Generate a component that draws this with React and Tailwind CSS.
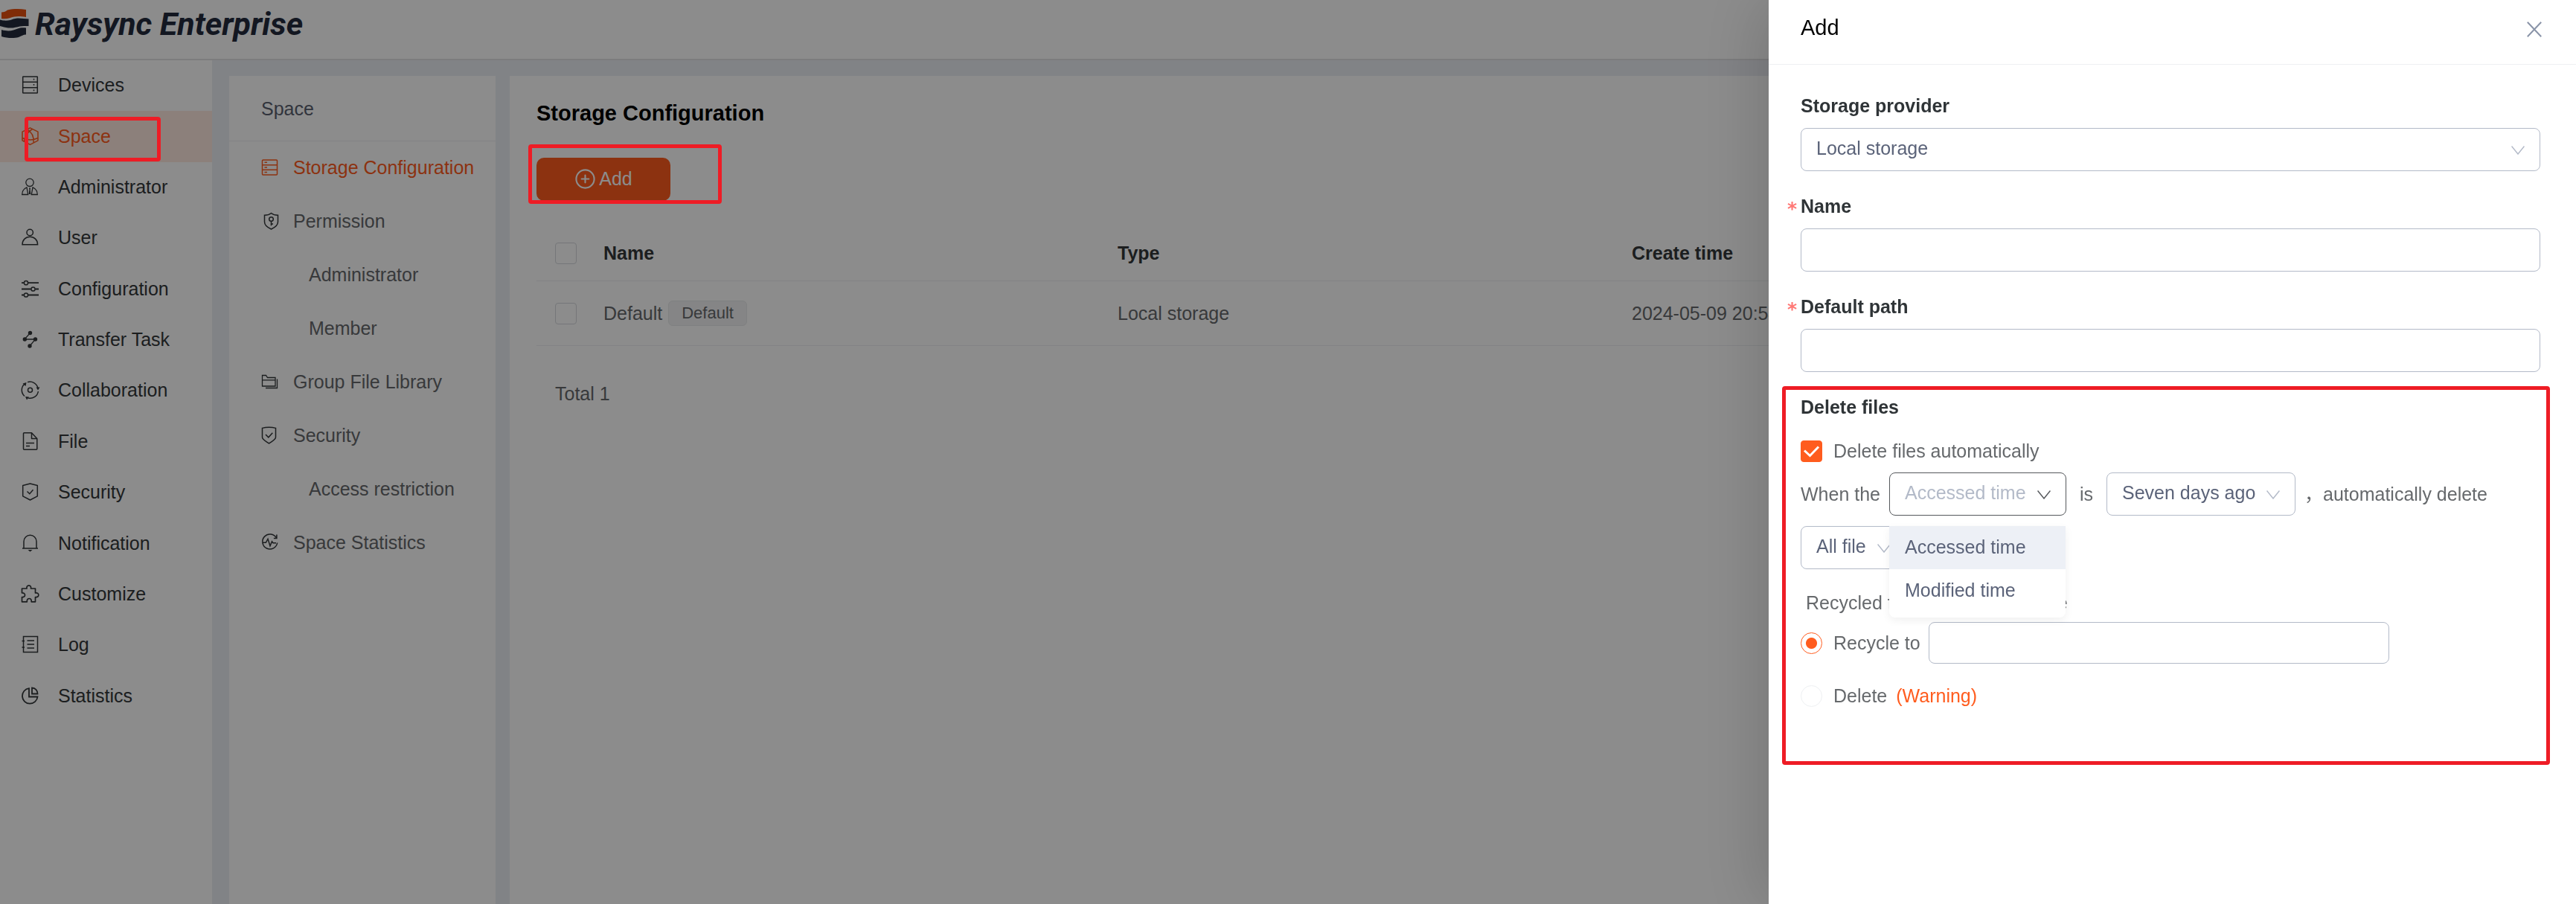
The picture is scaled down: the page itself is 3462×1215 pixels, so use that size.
import React from 'react';
import { CirclePlus } from 'lucide-react';

function Icon({ children, className = 'size-6' }) {
  return (
    <svg
      viewBox="0 0 24 24"
      fill="none"
      stroke="currentColor"
      strokeWidth="1.5"
      className={`shrink-0 overflow-visible ${className}`}
      aria-hidden="true"
    >
      {children}
    </svg>
  );
}

const icons = {
  devices: (
    <>
      <rect x="2.7" y="1" width="19.6" height="22" rx="0.5" />
      <path d="M2.7 8.2h19.6M2.7 15.8h19.6M17.5 3.8v1.8M17.5 11v1.8M17.5 18.4v1.8" />
    </>
  ),
  space: (
    <>
      <path d="M12.5 0.8l10.5 5.4v11.6l-10.5 5.6L2 17.8V6.2z" strokeLinejoin="round" />
      <path d="M8.5 2.8c5.5 3 9.2 9 8.7 18M15.5 2.5C9.5 6 5.5 11 4.5 19M2 14.5c6.5 3.2 15 3.2 21 0" />
    </>
  ),
  administrator: (
    <g strokeWidth="1.3">
      <circle cx="12" cy="6.3" r="5.2" />
      <path d="M8 12.8c-4 1.7-6.3 5-6.3 9.7h8zM16 12.8c4 1.7 6.3 5 6.3 9.7h-8z" />
      <path d="M11 13.5h2l-0.4 2.5 0.8 6h-2.8l0.8-6z" fill="currentColor" stroke="none" />
    </g>
  ),
  user: (
    <>
      <circle cx="12.2" cy="5.5" r="4.2" />
      <path d="M2 21.8c0-6.5 4.5-10.5 10.3-10.5s10.3 4 10.3 10.5z" />
    </>
  ),
  configuration: (
    <>
      <path d="M1 4.2h3M10 4.2h14M1 12.5h12.5M19.5 12.5H24M1 20.5h3M10 20.5h14" strokeWidth="1.8" />
      <circle cx="7" cy="4.2" r="2.6" />
      <circle cx="16.5" cy="12.5" r="2.6" />
      <circle cx="7" cy="20.5" r="2.6" />
    </>
  ),
  transfer: (
    <>
      <path d="M12.5 3.5L5 12h14.5l-7.5 9" strokeWidth="1.3" />
      <g fill="currentColor" stroke="none">
        <circle cx="12.5" cy="3.5" r="2.7" />
        <circle cx="5.3" cy="12" r="2.7" />
        <circle cx="19.5" cy="12" r="2.7" />
        <circle cx="12" cy="21" r="2.7" />
      </g>
    </>
  ),
  collaboration: (
    <>
      <circle cx="12.5" cy="12.3" r="3" />
      <path d="M9 1.6a11 11 0 0 1 14 8M23.4 14a11 11 0 0 1-13.5 9M5 20.5A11 11 0 0 1 5 4" />
      <path d="M2.5 3.5l5-1.5-1 5zM20.5 8.5h5l-2.5 4zM6 21l5 0.5-3 4z" fill="currentColor" stroke="none" />
    </>
  ),
  file: (
    <>
      <path d="M14.5 0.8H4.5a1 1 0 0 0-1 1v20.5a1 1 0 0 0 1 1h16.3a1 1 0 0 0 1-1V8.5zM14.5 0.8v7.7h7.3" strokeLinejoin="round" />
      <path d="M7 14.5h11M7 18.5h5" />
    </>
  ),
  security: (
    <>
      <path d="M12.5 1L22.3 3.5v14.3l-9.8 5.2-9.8-5.2V3.5z" strokeLinejoin="round" />
      <path d="M8.5 11.5l3.3 3.2 4.7-5.5" />
    </>
  ),
  notification: (
    <>
      <path d="M4 18.8V9.8a8.5 8.5 0 0 1 17 0v9M2 18.9h21" />
      <path d="M9.5 21h6l-3 2.5z" fill="currentColor" stroke="none" />
    </>
  ),
  customize: (
    <path
      d="M1.5 5h6.5c-0.5-2.5 0.8-4.2 2.8-4.2S14 2.5 13.5 5h6v6c2.8-0.5 4.3 0.7 4.3 2.7s-1.5 3.3-4.3 2.8v6.3h-5.3c0.3-3.2-1-4.3-2.9-4.3s-3.3 1.3-3 4.3H1.5v-6.3c2.7 0.3 4-1 4-2.8s-1.3-3-4-2.7z"
      strokeLinejoin="round"
      strokeWidth="1.7"
    />
  ),
  log: (
    <>
      <rect x="3.5" y="1.5" width="19" height="21" />
      <path d="M8.5 7h9.5M8.5 12h9.5M8.5 17h9.5M1.5 7.5h3.5M1.5 16h3.5" />
    </>
  ),
  statistics: (
    <g strokeWidth="1.8">
      <path d="M11 2.2a10.3 10.3 0 1 0 11.5 11.3H11z" />
      <path d="M15 1.5v8h7.5c0-4.5-3-8-7.5-8z" />
    </g>
  ),
  storage: (
    <>
      <rect x="1.5" y="2" width="20" height="20" rx="1" />
      <path d="M1.5 8.7h20M1.5 15.3h20M4.5 5.3h3.5M4.5 12h3.5M4.5 18.6h3.5" />
    </>
  ),
  permission: (
    <>
      <path d="M13.5 1.5c2.5 2 5.5 2.7 9 2.8v9c0 4.5-4 7.5-9 9.7-5-2.2-9-5.2-9-9.7v-9c3.5-0.1 6.5-0.8 9-2.8z" />
      <circle cx="13.5" cy="9.5" r="2.8" />
      <path d="M13.5 12.3v6M13.5 16h2.5" />
    </>
  ),
  library: (
    <g strokeWidth="1.3">
      <path d="M1.5 18V3.5h5l2 3h10.5V18zM1.5 9.8H19M21.5 8.5v12H6" />
    </g>
  ),
  shield: (
    <>
      <path d="M10.5 1.2c3 0 6 0.3 9 1.2v12.4c0 3.5-6 5.7-9 8.2-3-2.5-9-4.7-9-8.2V2.4c3-0.9 6-1.2 9-1.2z" />
      <path d="M6 11l3.8 3.8 5.5-6" />
    </>
  ),
  pulse: (
    <>
      <path d="M20.5 6A10 10 0 1 0 21.7 12.5M20.9 1.5v5h-4" />
      <path d="M2 12.3h4.3l2.7-5 3 9.5 2.5-6 1.5 2h4" />
    </>
  ),
};

const navItems = [
  ['Devices', icons.devices],
  ['Space', icons.space],
  ['Administrator', icons.administrator],
  ['User', icons.user],
  ['Configuration', icons.configuration],
  ['Transfer Task', icons.transfer],
  ['Collaboration', icons.collaboration],
  ['File', icons.file],
  ['Security', icons.security],
  ['Notification', icons.notification],
  ['Customize', icons.customize],
  ['Log', icons.log],
  ['Statistics', icons.statistics],
];

const subItems = [
  { label: 'Storage Configuration', icon: icons.storage, active: true },
  { label: 'Permission', icon: icons.permission },
  { label: 'Administrator' },
  { label: 'Member' },
  { label: 'Group File Library', icon: icons.library },
  { label: 'Security', icon: icons.shield },
  { label: 'Access restriction' },
  { label: 'Space Statistics', icon: icons.pulse },
];

// red outline that stays above the page mask
function Highlight({ className }) {
  return (
    <span className={`pointer-events-none absolute z-30 rounded-sm border-5 border-[#ee1c25] ${className}`} />
  );
}

function Header() {
  return (
    <header className="flex h-[81px] items-start border-b-2 border-[#e2e2e4] bg-white pt-3">
      <svg viewBox="0 0 39 40" className="h-10 w-[39px]" aria-hidden="true">
        <path d="M2 4.5c3 0 6-1 8-3C18-0.3 27-0.3 35 1v10c-6-1-11-1.500-16-0.500-5 1-9 3.500-17 2.500z" fill="#e8500f" />
        <path d="M0 14.500c5 1.500 9 1.500 14 0.500 4-1.500 6-2.500 11-2.500 5 0 9 1 13.500 1V23c-5 0-8-0.500-12 0.500S18 26 11 25.500c-4-0.500-7-1.500-11-2.500z" fill="#232b3d" />
        <path d="M2 28c7 2 12 1.500 16 0.500 5-1.500 8-4 17-3v9c-4 0-6 2-10 3.500-6 1.500-15 1.500-23-1z" fill="#232b3d" />
      </svg>
      <span className="ml-2 font-[Roboto,sans-serif] text-[43px] leading-[40px] font-bold text-[#232b3d] italic">
        Raysync Enterprise
      </span>
    </header>
  );
}

function Sidebar() {
  return (
    <nav className="w-[285px] shrink-0 bg-white">
      <ul className="grid h-[889px] auto-rows-fr">
        {navItems.map(([label, icon]) => {
          const active = label === 'Space';
          return (
            <li key={label} className="relative">
              <a
                href="#"
                className={`flex h-full items-center gap-[26px] pb-0.5 pl-7 ${active ? 'bg-[#ffe9e0] text-[#ff5c1e]' : 'text-[#33373a]'}`}
              >
                <Icon>{icon}</Icon>
                {label}
              </a>
              {active && <Highlight className="top-2 left-[33px] h-[60px] w-[183px]" />}
            </li>
          );
        })}
      </ul>
    </nav>
  );
}

function SubMenu() {
  return (
    <nav className="w-[358px] shrink-0 bg-white">
      <h2 className="flex h-[88px] items-center border-b border-[#eeeff2] pl-[43px] text-[#5a5f70]">Space</h2>
      <ul>
        {subItems.map(({ label, icon, active }) => (
          <li key={label}>
            <a
              href="#"
              className={`flex h-[72px] items-center gap-[19px] pb-0.5 whitespace-nowrap ${icon ? 'pl-[43px]' : 'pl-[107px]'} ${active ? 'text-[#ff5c1e]' : 'text-[#66696c]'}`}
            >
              {icon && <Icon className={active ? 'size-6' : 'size-6 text-[#33373a]'}>{icon}</Icon>}
              {label}
            </a>
          </li>
        ))}
      </ul>
    </nav>
  );
}

function TableCheckbox({ label }) {
  return (
    <input
      type="checkbox"
      aria-label={label}
      className="block size-[29px] appearance-none rounded-[4px] border border-[#d6d8dc] bg-white"
    />
  );
}

function StorageConfiguration() {
  return (
    <main className="min-w-0 flex-1 bg-white px-9 pt-8">
      <h1 className="text-[29px] leading-[36px] font-bold text-black">Storage Configuration</h1>

      <div className="relative mt-[42px]">
        <button
          type="button"
          className="flex h-[58px] w-[180px] items-center justify-center gap-1 rounded-[10px] bg-[#ff5c1e] pb-0.5 text-white"
        >
          <CirclePlus className="size-[29px]" strokeWidth={1.75} />
          Add
        </button>
        <Highlight className="-top-[18px] -left-[11px] h-[80px] w-[260px]" />
      </div>

      <table className="mt-[33px] w-full table-fixed border-separate border-spacing-0 text-left text-[#66696c]">
        <thead>
          <tr className="font-bold text-[#33373a] *:h-[75px] *:border-b *:border-[#eeeff2] *:p-0">
            <th className="w-[90px]">
              <div className="pl-[25px]">
                <TableCheckbox label="Select all" />
              </div>
            </th>
            <th className="w-[691px]">Name</th>
            <th className="w-[691px]">Type</th>
            <th>Create time</th>
          </tr>
        </thead>
        <tbody>
          <tr className="*:h-[87px] *:border-b *:border-[#eeeff2] *:p-0">
            <td>
              <div className="pl-[25px]">
                <TableCheckbox label="Select Default" />
              </div>
            </td>
            <td>
              <div className="flex items-center gap-2">
                Default
                <span className="flex h-[34px] items-center rounded-[6px] border border-[#e8e9eb] bg-[#f2f3f4] px-[17px] text-[22px] leading-8">
                  Default
                </span>
              </div>
            </td>
            <td>Local storage</td>
            <td>2024-05-09 20:54</td>
          </tr>
        </tbody>
      </table>

      <p className="mt-[46px] pl-[25px] text-[#66696c]">Total 1</p>
    </main>
  );
}

function Select({ id, label, value, options, className, selectClass, arrowClass }) {
  return (
    <div className={`relative ${className}`}>
      <select
        id={id}
        aria-label={label}
        defaultValue={value}
        className={`block h-[58px] w-full appearance-none rounded-[8px] border bg-white pb-1 pl-5 ${selectClass}`}
      >
        {options.map((option) => (
          <option key={option}>{option}</option>
        ))}
      </select>
      <svg
        viewBox="0 0 18 12"
        fill="none"
        stroke="currentColor"
        strokeWidth="1.5"
        className={`pointer-events-none absolute top-6 right-[21px] h-3 w-[18px] ${arrowClass}`}
        aria-hidden="true"
      >
        <path d="M0.5 0.5L9 11 17.5 0.5" />
      </svg>
    </div>
  );
}

function FieldLabel({ htmlFor, required, children }) {
  return (
    <label htmlFor={htmlFor} className="relative mb-3 block font-bold text-[#2f3437]">
      {required && (
        <span className="absolute top-1 -left-[18px] font-['DejaVu_Sans',sans-serif] text-[#ff7875]">*</span>
      )}
      {children}
    </label>
  );
}

function TextField({ id, label }) {
  return (
    <div className="mb-[29px]">
      <FieldLabel htmlFor={id} required>
        {label}
      </FieldLabel>
      <input id={id} type="text" className="block h-[58px] w-full rounded-[8px] border border-[#b3bac8] px-5" />
    </div>
  );
}

function Radio({ id, defaultChecked }) {
  return (
    <input
      id={id}
      type="radio"
      name="recycle"
      defaultChecked={defaultChecked}
      className="size-[29px] appearance-none rounded-full border border-[#eef0f2] checked:border-[#ff5c1e] checked:bg-[radial-gradient(circle,#ff5c1e_7px,transparent_8px)]"
    />
  );
}

function DeleteFiles() {
  return (
    <section className="relative">
      <Highlight className="-top-[10px] -right-[13px] -bottom-16 -left-[25px]" />
      <h3 className="mb-3 font-bold text-[#2f3437]">Delete files</h3>

      <div className="flex h-[58px] items-center gap-[15px]">
        <span className="relative">
          <input
            id="auto"
            type="checkbox"
            defaultChecked
            className="block size-[29px] appearance-none rounded-[4px] border border-[#b3bac8] checked:border-[#ff5c1e] checked:bg-[#ff5c1e]"
          />
          <svg
            viewBox="0 0 29 29"
            fill="none"
            stroke="#fff"
            strokeWidth="3"
            className="pointer-events-none absolute inset-0"
            aria-hidden="true"
          >
            <path d="M5 13.5l7.5 7L24 8.5" />
          </svg>
        </span>
        <label htmlFor="auto">Delete files automatically</label>
      </div>

      <div className="flex items-center">
        <span className="w-[119px]">When the</span>
        <div className="relative">
          <Select
            label="Time type"
            value="Accessed time"
            options={['Accessed time', 'Modified time']}
            className="w-[238px]"
            selectClass="border-[#55585c] text-[#b3bac8]"
            arrowClass="text-[#55585c]"
          />
          <ul
            role="listbox"
            aria-label="Time type options"
            className="absolute top-[72px] left-0 z-10 w-[237px] rounded-b-[8px] bg-white pb-[7px] text-[#5b6379] shadow-[0_4px_12px_rgba(0,0,0,0.06)]"
          >
            <li role="option" aria-selected="true" className="h-[58px] bg-[#edf0f6] pl-[21px] leading-[56px]">
              Accessed time
            </li>
            <li role="option" aria-selected="false" className="h-[58px] pl-[21px] leading-[56px]">
              Modified time
            </li>
          </ul>
        </div>
        <span className="w-[54px] text-center">is</span>
        <Select
          label="Period"
          value="Seven days ago"
          options={['Seven days ago', 'Thirty days ago']}
          className="w-[254px]"
          selectClass="border-[#b3bac8] text-[#5b6379]"
          arrowClass="text-[#b3bac8]"
        />
        <span className="pl-3">，automatically delete</span>
      </div>

      <Select
        label="File type"
        value="All file"
        options={['All file']}
        className="mt-[14px] w-[142px]"
        selectClass="border-[#b3bac8] text-[#5b6379]"
        arrowClass="text-[#b3bac8]"
      />

      <p className="mt-[27px] mb-2 pl-[7px]">Recycled files to the main place</p>

      <div className="flex items-center gap-[15px]">
        <Radio id="recycle-to" defaultChecked />
        <label htmlFor="recycle-to">Recycle to</label>
        <input
          type="text"
          aria-label="Recycle path"
          className="-ml-1 h-14 w-[619px] rounded-[8px] border border-[#b3bac8] px-5"
        />
      </div>

      <div className="mt-[14px] flex h-[58px] items-center gap-[15px]">
        <Radio id="delete" />
        <label htmlFor="delete" className="flex gap-3">
          Delete <span className="text-[#ff5c1e]">(Warning)</span>
        </label>
      </div>
    </section>
  );
}

function AddDrawer() {
  return (
    <aside
      role="dialog"
      aria-label="Add"
      className="fixed inset-y-0 right-0 z-20 w-[1085px] max-w-full bg-white text-[#66696c] shadow-[-12px_0_80px_rgba(0,0,0,0.16)]"
    >
      <div className="flex h-[87px] items-start justify-between border-b border-[#eeeff2] pt-[19px] pr-[46px] pl-[43px]">
        <h2 className="text-[29px] leading-[36px] text-black">Add</h2>
        <button type="button" aria-label="Close" className="mt-[10px] text-[#8a94a8]">
          <svg viewBox="0 0 20 21" fill="none" stroke="currentColor" strokeWidth="2" className="h-[21px] w-5">
            <path d="M0.8 0.8l18.4 19.4M19.2 0.8L0.8 20.2" />
          </svg>
        </button>
      </div>

      <form className="pt-[37px] pr-12 pl-[43px]">
        <div className="mb-[29px]">
          <FieldLabel htmlFor="provider">Storage provider</FieldLabel>
          <Select
            id="provider"
            value="Local storage"
            options={['Local storage']}
            selectClass="border-[#b3bac8] text-[#5b6379]"
            arrowClass="text-[#b3bac8]"
          />
        </div>
        <TextField id="name" label="Name" />
        <TextField id="path" label="Default path" />
        <DeleteFiles />
      </form>
    </aside>
  );
}

function App() {
  return (
    <div className="flex min-h-screen flex-col bg-[#eceef4] font-['Liberation_Sans','Noto_Sans_CJK_SC',sans-serif] text-[25px] leading-[36px]">
      <Header />
      <div className="flex flex-1">
        <Sidebar />
        <div className="flex min-w-0 flex-1 gap-[19px] pt-[21px] pr-5 pl-[23px]">
          <SubMenu />
          <StorageConfiguration />
        </div>
      </div>
      <div className="fixed inset-0 z-10 bg-black/45" />
      <AddDrawer />
    </div>
  );
}

export default App;
